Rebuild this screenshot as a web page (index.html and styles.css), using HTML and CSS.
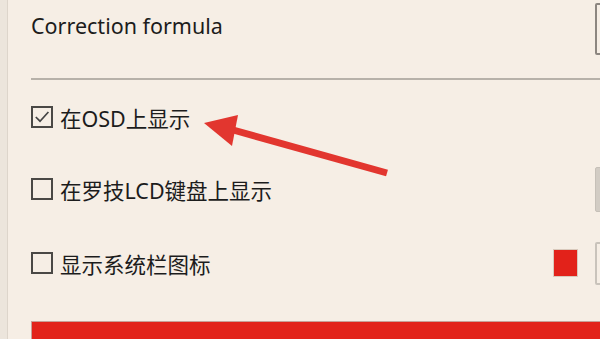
FILE: index.html
```html
<!DOCTYPE html>
<html lang="zh-CN">
<head>
    <meta charset="UTF-8">
    <title>OSD settings</title>
    <link rel="stylesheet" href="styles.css">
</head>
<body>
    <div class="window">
        <div class="sidebar"></div>

        <div class="panel">
            <div class="title-row">
                <span class="title">Correction formula</span>
                <span class="side-btn outlined tall"></span>
            </div>

            <div class="divider"></div>

            <div class="option opt-osd">
                <label class="check">
                    <span class="box">
                        <svg viewBox="0 0 18 18" width="18" height="18">
                            <path d="M2.8 9 L7 13.2 L15.4 4" fill="none" stroke="#444" stroke-width="1.7"/>
                        </svg>
                    </span>
                    在OSD上显示
                </label>
            </div>

            <div class="option opt-lcd">
                <label class="check">
                    <span class="box"></span>
                    在罗技LCD键盘上显示
                </label>
                <span class="side-btn filled"></span>
            </div>

            <div class="option opt-tray">
                <label class="check">
                    <span class="box"></span>
                    显示系统栏图标
                </label>
                <span class="tray-group">
                    <span class="swatch"></span>
                    <span class="side-btn outlined light"></span>
                </span>
            </div>

            <div class="red-bar"></div>
        </div>

        <!-- annotation arrow drawn over the dialog -->
        <svg class="arrow" viewBox="0 0 600 339" width="600" height="339">
            <line x1="387" y1="173" x2="226" y2="128" stroke="#e2362f" stroke-width="7"/>
            <polygon points="204,123 238,115 232,146" fill="#e2362f"/>
        </svg>
    </div>
</body>
</html>
```

FILE: styles.css
```css
body {
    margin: 0;
    padding: 0;
    width: 600px;
    height: 339px;
    overflow: hidden;
    background-color: #f6eee5;
    font-family: "Noto Sans", "Noto Sans CJK SC", sans-serif;
    color: #1c1c1c;
}

.window {
    position: relative;
    display: flex;
    height: 339px;
}

.sidebar {
    width: 7px;
    flex: none;
    background-color: #ece5dc;
    border-right: 1px solid #ddd5cb;
}

.panel {
    flex: none;
    width: 632px;
    padding-left: 23px;
    box-sizing: border-box;
    display: flex;
    flex-direction: column;
}

.panel > * {
    flex-shrink: 0;
}

.title-row {
    height: 78px;
    display: flex;
    justify-content: space-between;
    align-items: flex-start;
}

.title {
    font-size: 21.5px;
    margin-top: 11px;
}

.side-btn {
    width: 45px;
    box-sizing: border-box;
    border-radius: 2px;
}

.side-btn.tall {
    height: 52px;
    margin-top: 3px;
}

.side-btn.outlined {
    border: 2px solid #8c8680;
}

.side-btn.outlined.light {
    height: 43px;
    border-color: #c9c3bb;
}

.side-btn.filled {
    height: 45px;
    background-color: #d2ccc4;
    border: 1px solid #c6c0b8;
}

.divider {
    height: 2px;
    background-color: #b7b1a9;
}

.option {
    display: flex;
    justify-content: space-between;
    align-items: center;
    font-size: 21.5px;
}

.opt-osd {
    height: 74px;
}

.opt-lcd {
    height: 70px;
}

.opt-tray {
    height: 78px;
}

.check {
    display: flex;
    align-items: center;
    gap: 7px;
}

.box {
    width: 22px;
    height: 22px;
    box-sizing: border-box;
    border: 2px solid #4a4845;
    display: flex;
    align-items: center;
    justify-content: center;
}

.tray-group {
    display: flex;
    align-items: center;
    gap: 17px;
}

.swatch {
    width: 23px;
    height: 26px;
    background-color: #e2221a;
    border: 1px solid #d9c9bc;
}

.red-bar {
    margin-top: 19px;
    height: 20px;
    background-color: #e2231a;
    border-top: 1px solid #c7a197;
    border-left: 1px solid #c7a197;
}

.arrow {
    position: absolute;
    left: 0;
    top: 0;
    pointer-events: none;
}
```
